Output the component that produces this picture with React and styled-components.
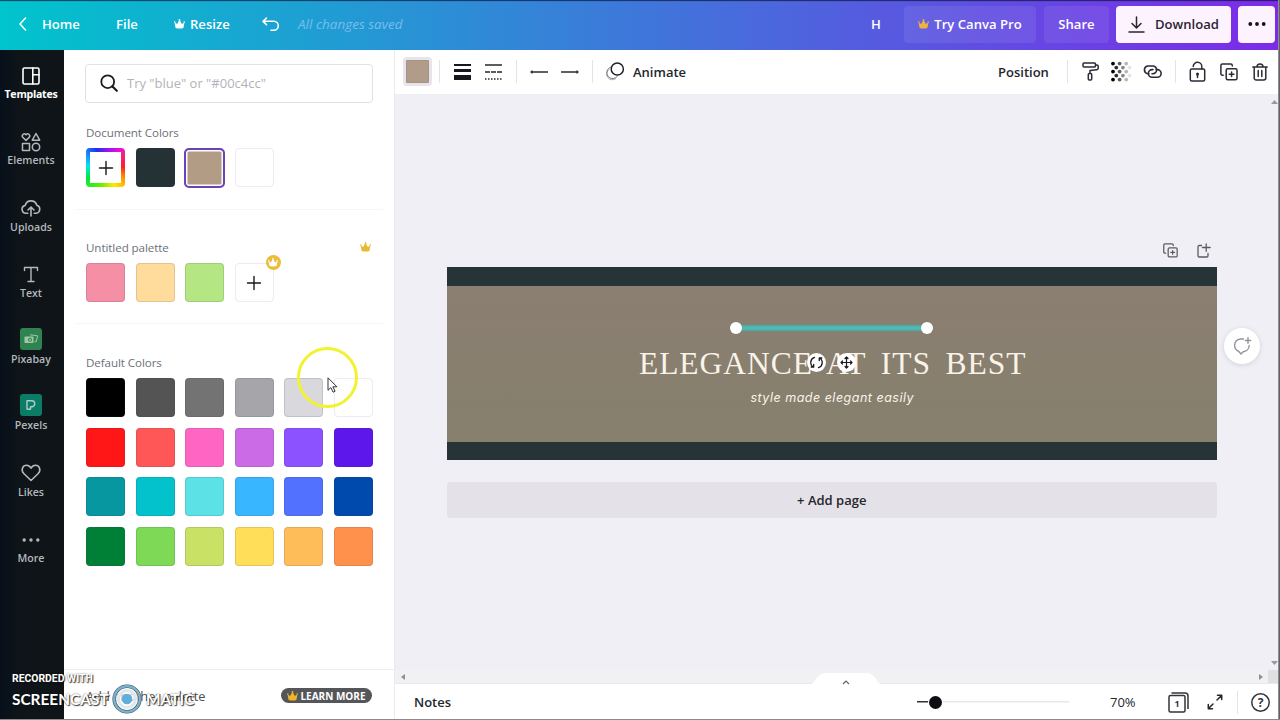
import React from "react";
import styled, { createGlobalStyle } from "styled-components";

const Global = createGlobalStyle`
  * { box-sizing: border-box; }
  body { margin: 0; font-family: "Open Sans", "Noto Sans", sans-serif; overflow: hidden; color: #24272c; }
  svg { display: block; flex: none; overflow: visible; }
`;

/* ---------- shell ---------- */
const Shell = styled.div`
  position: relative;
  width: 1280px;
  height: 720px;
  display: grid;
  grid-template-rows: 50px 669px;
  background: #fff;
  border-bottom: 1px solid #8b8b8e;
  overflow: hidden;
`;
const Edge = styled.div`
  position: absolute;
  top: 0;
  right: 0;
  width: 2px;
  height: 720px;
  background: linear-gradient(90deg, #a4a4a8, #4b4b50);
`;
const Body = styled.div`
  display: grid;
  grid-template-columns: 64px 330px 884px;
`;

/* ---------- top bar ---------- */
const TopBar = styled.header`
  display: flex;
  align-items: center;
  padding: 0 0 2px 19px;
  background: linear-gradient(90deg, #00c4cc, #7d2ae8);
  box-shadow: inset 0 2px 1px -1px rgba(10, 20, 60, 0.75);
  color: #fff;
`;
const TopText = styled.span`
  width: ${(p) => p.$w}px;
  margin-left: ${(p) => p.$gap}px;
  font-size: 13.1px;
  font-weight: 600;
  line-height: 20px;
  white-space: nowrap;
`;
const SavedText = styled(TopText)`
  font-size: 13.5px;
  font-weight: 400;
  font-style: italic;
  color: #78bdec;
`;
const Gap = styled.span`
  width: ${(p) => p.$w}px;
  flex: none;
`;
const TopButton = styled.button`
  width: ${(p) => p.$w}px;
  height: 37px;
  margin-top: 1px;
  margin-right: ${(p) => p.$mr || 0}px;
  padding: 0 0 1px;
  border: 0;
  border-radius: 4px;
  display: flex;
  align-items: center;
  justify-content: center;
  gap: ${(p) => p.$gap || 0}px;
  background: ${(p) => (p.$solid ? "#fdf3ff" : "rgba(255,255,255,0.08)")};
  color: ${(p) => (p.$solid ? "#2a2433" : "#fff")};
  font: 600 13.100px/20px "Open Sans", "Noto Sans", sans-serif;
  white-space: nowrap;
  flex: none;
`;

/* ---------- left rail ---------- */
const Rail = styled.nav`
  background: linear-gradient(90deg, #07101a, #0e1418 30%);
  display: flex;
  flex-direction: column;
`;
const RailItem = styled.div`
  height: 66.3px;
  padding: 14px 2px 0 0;
  display: flex;
  flex-direction: column;
  align-items: center;
  color: ${(p) => (p.$active ? "#fff" : "#b4b8bb")};
`;
const RailIcon = styled.div`
  height: 23px;
  display: flex;
  align-items: center;
  justify-content: center;
`;
const RailLabel = styled.span`
  font-size: 10.600px;
  font-weight: ${(p) => (p.$active ? 700 : 600)};
  line-height: 14px;
  letter-spacing: ${(p) => (p.$active ? -0.25 : 0)}px;
`;
const AppTile = styled.div`
  width: 22px;
  height: 22px;
  margin-bottom: 4px;
  border-radius: 3px;
  background: ${(p) => p.$bg};
  display: flex;
  align-items: center;
  justify-content: center;
`;

/* ---------- colour panel ---------- */
const Panel = styled.aside`
  display: flex;
  flex-direction: column;
  background: #fff;
  padding-top: 14px;
`;
const Search = styled.div`
  width: 288px;
  height: 39px;
  margin-left: 21px;
  padding: 0 0 1px 14px;
  border: 1px solid #e2e2e6;
  border-radius: 4px;
  display: flex;
  align-items: center;
  gap: 9px;
  color: #b2b3b9;
  font-size: 13px;
`;
const Section = styled.section`
  height: ${(p) => p.$h}px;
  margin: 0 11px 0 12px;
  padding: ${(p) => p.$pt}px 10px 0;
  border-bottom: ${(p) => (p.$last ? "0" : "1px solid #f6f5f8")};
`;
const SectionHead = styled.div`
  display: flex;
  align-items: center;
  justify-content: space-between;
  height: 18px;
  margin-bottom: 7px;
  padding-right: 2px;
  font-size: 11.6px;
  font-weight: 500;
  letter-spacing: -0.08px;
  color: #6d7078;
`;
const Swatches = styled.div`
  display: grid;
  grid-template-columns: repeat(6, 39px);
  gap: 10.5px;
  margin-right: -2px;
`;
const Swatch = styled.div`
  position: relative;
  width: 39px;
  height: 39px;
  border-radius: 4px;
  background: ${(p) => p.$c};
  border: 1px solid ${(p) => (p.$light ? "#efe9f2" : "rgba(60,60,80,0.14)")};
  display: flex;
  align-items: center;
  justify-content: center;
`;
const SelectedSwatch = styled(Swatch)`
  border: 2px solid #6b42b8;
  box-shadow: inset 0 0 0 1.5px #fff;
  width: 41px;
  height: 40px;
  margin-left: -1px;
  border-radius: 5px;
`;
const RainbowSwatch = styled(Swatch)`
  border: 0;
  background: conic-gradient(from 45deg, #f0209a, #ff2020 12%, #ffa000 22%, #ffe800 30%, #60f000 42%, #00e840 54%, #00e8e8 64%, #1890ff 72%, #2030f0 80%, #a010f0 90%, #f010d0);
`;
const RainbowCore = styled.div`
  width: 31px;
  height: 31px;
  background: #fff;
  display: flex;
  align-items: center;
  justify-content: center;
`;
const Badge = styled.div`
  position: absolute;
  right: -8px;
  top: -9px;
  width: 15px;
  height: 15px;
  border-radius: 50%;
  background: #ecbd3a;
  display: flex;
  align-items: center;
  justify-content: center;
`;
const PanelFoot = styled.footer`
  height: 50px;
  margin-top: auto;
  padding: 2px 22px 0 22px;
  border-top: 1px solid #eeedf1;
  display: flex;
  align-items: center;
  justify-content: space-between;
  font-size: 12.8px;
  color: #4b4e54;
`;
const LearnPill = styled.span`
  width: 91px;
  height: 15px;
  border-radius: 8px;
  background: #55565a;
  color: #fff;
  font-size: 10px;
  font-weight: 700;
  display: flex;
  align-items: center;
  justify-content: center;
  gap: 2px;
  white-space: nowrap;
`;

/* ---------- editor ---------- */
const Editor = styled.main`
  display: grid;
  grid-template-rows: 44px 576px 14px 35px;
  border-left: 1px solid #eceaf0;
`;
const Tools = styled.div`
  display: flex;
  align-items: center;
  padding: 0 0 1px 8px;
  background: #fff;
`;
const CurrentColor = styled.div`
  width: 29px;
  height: 29px;
  border-radius: 4px;
  border: 3px solid #e9e3eb;
  background: #b09c88;
  box-shadow: inset 0 0 0 1px #a39486;
  flex: none;
`;
const Rule = styled.i`
  width: 1px;
  height: 23px;
  margin: 0 ${(p) => p.$r}px 0 ${(p) => p.$l}px;
  background: #e4e3e8;
  flex: none;
`;
const ToolText = styled.span`
  width: ${(p) => p.$w}px;
  font-size: 13px;
  font-weight: 600;
  white-space: nowrap;
  line-height: 20px;
  flex: none;
`;
const ZoomText = styled(ToolText)`
  font-weight: 500;
`;
const Canvas = styled.div`
  position: relative;
  padding: 148px 0 0 52px;
  background: #f0eff5;
`;
const PageActions = styled.div`
  width: 770px;
  height: 25px;
  padding: 1px 6px 0 0;
  display: flex;
  justify-content: flex-end;
  gap: 19px;
`;
const Design = styled.div`
  position: relative;
  width: 769.5px;
  height: 193px;
  border: solid #263437;
  border-width: 19.5px 0 18.5px;
  background: linear-gradient(#8b7e72, #887f6f 50%, #87806d);
  color: #faf3e9;
  text-align: center;
`;
const Headline = styled.div`
  padding: 60px 0 0 2px;
  height: 99px;
  font: 400 31.5px/36px "Liberation Serif", serif;
  letter-spacing: 1px;
  word-spacing: 5.8px;
  white-space: nowrap;
`;
const Tagline = styled.div`
  padding-left: 1px;
  font: italic 400 12.5px/26px Inter, sans-serif;
  letter-spacing: 0.5px;
`;
const SelectedLine = styled.div`
  position: absolute;
  left: 283px;
  top: 36px;
  width: 203px;
  height: 12px;
  display: flex;
  align-items: center;
  justify-content: space-between;
  background: linear-gradient(#45aaa4, #55bdb5 50%, #45aaa4) center / 184px 6px no-repeat;
`;
const Handle = styled.i`
  width: 12px;
  height: 12px;
  border-radius: 50%;
  background: #fff;
`;
const HandleButtons = styled.div`
  position: absolute;
  left: 360px;
  top: 66.500px;
  display: flex;
  gap: 11px;
`;
const RoundHandle = styled.div`
  width: 19px;
  height: 19px;
  border-radius: 50%;
  background: #fff;
  display: flex;
  align-items: center;
  justify-content: center;
`;
const AddPage = styled.div`
  width: 769.5px;
  height: 36px;
  margin-top: 22px;
  border-radius: 3px;
  background: #e4e2e8;
  display: flex;
  align-items: center;
  justify-content: center;
  font-size: 13px;
  font-weight: 600;
`;
const CommentButton = styled.div`
  position: absolute;
  left: 829px;
  top: 234px;
  width: 36px;
  height: 36px;
  border-radius: 50%;
  background: #fff;
  box-shadow: 0 1px 5px rgba(60, 50, 80, 0.16);
  display: flex;
  align-items: center;
  justify-content: center;
`;
const ScrollUp = styled.svg`
  position: absolute;
  right: 0;
  top: 6px;
`;
const ScrollDown = styled.svg`
  position: absolute;
  right: 0;
  bottom: 5px;
`;
const ScrollBar = styled.div`
  position: relative;
  display: flex;
  align-items: center;
  padding-left: 6px;
  background: #f1f0f3;
  border-bottom: 1px solid #e9e8ec;
`;
const Corner = styled.i`
  width: 10px;
  height: 13px;
  margin-left: auto;
  background: #e0dfe2;
`;
const DrawerTab = styled.svg`
  position: absolute;
  left: 414px;
  top: 3px;
`;
const StatusBar = styled.footer`
  display: flex;
  align-items: center;
  padding: 1px 0 0 19px;
  background: #fff;
`;
const Slider = styled.div`
  width: 152px;
  height: 13px;
  margin-left: 465px;
  padding-left: 12px;
  display: flex;
  align-items: center;
  background: linear-gradient(90deg, #303238 13px, #e8e7eb 13px) center / 100% 1.500px no-repeat;
`;
const Knob = styled.i`
  width: 13px;
  height: 13px;
  border-radius: 50%;
  background: #0c0e12;
  box-shadow: 0 0 0 1px #fff;
`;

/* ---------- overlays ---------- */
const PointerHalo = styled.div`
  position: absolute;
  left: 297px;
  top: 347px;
  width: 61px;
  height: 61px;
  border-radius: 50%;
  border: 3px solid #f2f22e;
`;
const Pointer = styled.svg`
  position: absolute;
  left: 327px;
  top: 377px;
`;
const Watermark = styled.div`
  position: absolute;
  left: 12px;
  top: 672px;
  color: #fff;
  text-shadow: 1px 1px 1px rgba(20, 20, 20, 0.8), 0 0 2px rgba(20, 20, 20, 0.65);
`;
const RecordedWith = styled.div`
  font: 700 10.4px/14px Roboto, sans-serif;
`;
const BrandRow = styled.div`
  display: flex;
  align-items: center;
  height: 26px;
  font: 700 15.4px/26px Lato, sans-serif;
`;
const BrandWord = styled.span`
  width: ${(p) => p.$w}px;
  white-space: nowrap;
`;

const Crown = ({ c, w = 11, h = 10 }) => (
  <svg width={w} height={h} viewBox="0 0 11 10">
    <path d="M1.600 9 .5 3.200 3.100 5 5.500.8 7.900 5l2.600-1.800L9.400 9Q5.500 10 1.600 9Z" fill={c} />
    <circle cx=".8" cy="3" r=".8" fill={c} />
    <circle cx="5.5" cy="1" r=".9" fill={c} />
    <circle cx="10.2" cy="3" r=".8" fill={c} />
  </svg>
);
const Ico = ({ w = 20, h = 20, s = 1.5, c = "currentColor", children }) => (
  <svg width={w} height={h} viewBox={`0 0 ${w} ${h}`} fill="none" stroke={c} strokeWidth={s} strokeLinecap="round" strokeLinejoin="round">
    {children}
  </svg>
);
const Plus = () => (
  <Ico w={14} h={14} s={1.4} c="#17191d"><path d="M7 .5v13M.5 7h13" /></Ico>
);
const Dots = ({ r, step, c }) => (
  <svg width="20" height="6" viewBox="0 0 20 6" fill={c}>
    <circle cx={10 - step} cy="3" r={r} /><circle cx="10" cy="3" r={r} /><circle cx={10 + step} cy="3" r={r} />
  </svg>
);
const CopyPlus = ({ s = 1.5, size = 18, c = "#2b2d33" }) => (
  <svg width={size} height={size} viewBox="0 0 18 18" fill="none" stroke={c} strokeWidth={s} strokeLinecap="round" strokeLinejoin="round">
    <path d="M3.2 12.2H2.4A1.5 1.5 0 0 1 .9 10.7V2.4A1.5 1.5 0 0 1 2.4.9h8.4a1.5 1.5 0 0 1 1.5 1.5v.6" />
    <rect x="6.2" y="5.8" width="10.8" height="11" rx="1.5" /><path d="M11.6 9v4.6M9.3 11.3h4.6" />
  </svg>
);

const railItems = [
  ["Templates", <Ico w={18} h={18} s={1.6}><rect x="1" y="1" width="16" height="16" rx="1.5" /><path d="M10.8 1v16M10.8 7.8H17" /></Ico>],
  ["Elements", <Ico w={20} h={20} s={1.5}><path d="M5 8.4 1.700 5.200C.2 3.200 3.300.2 5 2.800c1.700-2.600 4.800.4 3.300 2.400ZM15 1.500l3.700 6.700h-7.400ZM1.500 11.500h7v7h-7z" /><circle cx="15" cy="15" r="3.700" /></Ico>],
  ["Uploads", <Ico w={20} h={18} s={1.6}><path d="M6.800 14.300H5a4 4 0 0 1-.8-7.900A6 6 0 0 1 15.800 6.300a4.100 4.100 0 0 1-.6 8h-2M10 17V8.500M7 11l3-3 3 3" /></Ico>],
  ["Text", <Ico w={16} h={17} s={1.4}><path d="M1.500 4.500V1.500h13v3M8 1.500v14M5 15.500h6" /></Ico>],
  ["Pixabay", <AppTile $bg="#2f8350"><svg width="14" height="10" viewBox="0 0 14 10"><path d="m6 .8 7.500 1-1.200 5.700-2 .4" fill="none" stroke="#9cc9a4" /><rect x=".5" y="2.500" width="9" height="6.500" rx=".7" fill="#9cc9a4" /><circle cx="6" cy="5.800" r="2" fill="#2f8350" /><circle cx="6" cy="5.800" r="1" fill="#9cc9a4" /></svg></AppTile>],
  ["Pexels", <AppTile $bg="#0b7d66"><Ico w={10} h={10} s={1.400} c="#a9cec5"><path d="M1 .8h4.800a3 3 0 0 1 .7 5.900H4.500V9.200H1Z" /></Ico></AppTile>],
  ["Likes", <Ico w={20} h={18} s={1.600}><path d="M10 16.500 3 9.700C-.8 5.700 2 1.300 5.500 1.300c2 0 3.500 1.200 4.500 2.900 1-1.700 2.500-2.900 4.500-2.900C18 1.300 20.800 5.700 17 9.700Z" /></Ico>],
  ["More", <Dots r={1.700} step={6.800} c="#b4b8bb" />],
];
const defaults = [
  "#000000", "#545454", "#737373", "#a6a6aa", "#d9d8dc", "#ffffff",
  "#ff1616", "#ff5757", "#ff66c4", "#cb6ce6", "#8c52ff", "#5e17eb",
  "#0797a0", "#03c2cb", "#5ce1e6", "#38b6ff", "#5271ff", "#004aad",
  "#008037", "#7ed957", "#c9e265", "#ffde59", "#ffbd59", "#ff914d",
];

export default function App() {
  return (
    <Shell>
      <Global />
      <TopBar>
        <Ico w={8} h={14} s={1.6}><path d="M6.500 1 1 7l5.500 6" /></Ico>
        <TopText $w={37} $gap={15}>Home</TopText>
        <TopText $w={22} $gap={37}>File</TopText>
        <Gap $w={36} /><Crown c="#fff" />
        <TopText $w={40} $gap={5}>Resize</TopText>
        <Gap $w={32} />
        <Ico w={18} h={15} s={1.600}><path d="M4.500 1 1 4.300l3.500 3.300M1.300 4.300h10.500a4.500 4.500 0 0 1 0 9H9" /></Ico>
        <SavedText $w={106} $gap={18}>All changes saved</SavedText>
        <TopText $w={10} $gap={467}>H</TopText>
        <Gap $w={23} />
        <TopButton $w={132} $mr={8} $gap={5}><Crown c="#eeb33e" />Try Canva Pro</TopButton>
        <TopButton $w={65} $mr={7}>Share</TopButton>
        <TopButton $w={115} $mr={7} $gap={10} $solid>
          <Ico w={17} h={17} s={1.500}><path d="M8.500 1v10.500M4 7.500l4.500 4.500L13 7.500M1 16h15" /></Ico>Download
        </TopButton>
        <TopButton $w={37} $solid><Dots r={1.900} step={6.700} c="#16101e" /></TopButton>
      </TopBar>
      <Body>
        <Rail>
          {railItems.map(([name, icon], i) => (
            <RailItem key={name} $active={i === 0}>
              <RailIcon>{icon}</RailIcon>
              <RailLabel $active={i === 0}>{name}</RailLabel>
            </RailItem>
          ))}
        </Rail>
        <Panel>
          <Search>
            <Ico w={18} h={18} s={1.800} c="#1b1d21"><circle cx="7.700" cy="7.700" r="6.400" /><path d="m12.500 12.500 4.300 4.300" strokeWidth="2.200" /></Ico>
            Try "blue" or "#00c4cc"
          </Search>
          <Section $h={107} $pt={20}>
            <SectionHead>Document Colors</SectionHead>
            <Swatches>
              <RainbowSwatch><RainbowCore><Plus /></RainbowCore></RainbowSwatch>
              <Swatch $c="#243236" />
              <SelectedSwatch $c="#b39c86" />
              <Swatch $c="#fff" $light />
            </Swatches>
          </Section>
          <Section $h={114} $pt={28}>
            <SectionHead>Untitled palette<Crown c="#e8b931" /></SectionHead>
            <Swatches>
              <Swatch $c="#f58fa5" /><Swatch $c="#ffdb9c" /><Swatch $c="#b4e683" />
              <Swatch $c="#fff" $light><Plus /><Badge><Crown c="#fff" w={10} h={9} /></Badge></Swatch>
            </Swatches>
          </Section>
          <Section $h={260} $pt={29} $last>
            <SectionHead>Default Colors</SectionHead>
            <Swatches>{defaults.map((c) => <Swatch key={c} $c={c} $light={c === "#ffffff"} />)}</Swatches>
          </Section>
          <PanelFoot>
            Add another palette
            <LearnPill><Crown c="#f0b429" />LEARN MORE</LearnPill>
          </PanelFoot>
        </Panel>
        <Editor>
          <Tools>
            <CurrentColor />
            <Rule $l={7} $r={14} />
            <svg width="17" height="16" viewBox="0 0 17 16" fill="#16181c"><path d="M0 0h17v2H0zM0 5h17v3H0zM0 11h17v5H0z" /></svg>
            <Gap $w={14} />
            <svg width="17" height="16" viewBox="0 0 17 16" fill="none" stroke="#25272c"><path d="M0 1h17" strokeWidth="1.500" /><path d="M0 8h17" strokeWidth="1.500" strokeDasharray="5 1" /><path d="M0 15h17" strokeWidth="1.500" strokeDasharray="1.500 1.500" /></svg>
            <Rule $l={14} $r={13} />
            <svg width="18" height="6" viewBox="0 0 18 6"><path d="M1 3h17" stroke="#292b30" strokeWidth="1.500" /><path d="m0 3 2.500-2v4z" fill="#292b30" /></svg>
            <Gap $w={13} />
            <svg width="18" height="6" viewBox="0 0 18 6"><path d="M0 3h17" stroke="#292b30" strokeWidth="1.500" /><path d="m18 3-2.500-2v4z" fill="#292b30" /></svg>
            <Rule $l={13} $r={13} />
            <Ico w={18} h={19} s={1.500} c="#202226"><path d="M3 7.500a5.500 5.500 0 1 0 6.500 9.300" stroke="#a9a9ad" strokeWidth="1" /><path d="M4.700 5a6 6 0 1 0 7 9" stroke="#77797e" strokeWidth="1" /><circle cx="11.300" cy="7" r="6.100" /></Ico>
            <Gap $w={9} />
            <ToolText $w={54}>Animate</ToolText>
            <Gap $w={311} />
            <ToolText $w={51}>Position</ToolText>
            <Rule $l={18} $r={14} />
            <Ico w={17} h={19} s={1.500} c="#2b2d33"><rect x="1" y="1" width="12.500" height="4" rx="1" /><path d="M13.500 3H15a1.200 1.200 0 0 1 1.200 1.200v2A1.500 1.500 0 0 1 14.700 7.700L8 8.500V11" /><rect x="6.300" y="11.500" width="3.400" height="6.500" rx="1" /></Ico>
            <Gap $w={12} />
            <svg width="19" height="19" viewBox="0 0 19 19">
              {[0, 1, 2, 3, 4, 5].map((col) => [0, 1, 2, 3, 4].map((row) => (col + row) % 2 === 0 && (
                <circle key={`${col}-${row}`} cx={2 + col * 3.300} cy={1.600 + row * 4} r="1.900" fill="#000" opacity={1 - col * 0.18} />
              )))}
            </svg>
            <Gap $w={13} />
            <Ico w={19} h={15} s={1.600} c="#2b2d33"><path d="M5.800 9.700H4.700A3.900 3.900 0 0 1 4.700 2h5.100a3.850 3.850 0 0 1 0 7.700H9" /><path d="M13.200 5.600h1.100a3.850 3.850 0 0 1 0 7.700H9.200a3.850 3.850 0 0 1 0-7.700H10" /></Ico>
            <Rule $l={13} $r={13} />
            <Ico w={17} h={20} s={1.500} c="#2b2d33"><rect x="1.300" y="7" width="14.400" height="12" rx="1.500" /><path d="M4.200 4.500A4.300 4.300 0 0 1 12.800 4.700V7M8.500 12.500v3" /><circle cx="8.500" cy="12" r=".8" /></Ico>
            <Gap $w={14} />
            <CopyPlus />
            <Gap $w={14} />
            <Ico w={16} h={18} s={1.500} c="#2b2d33"><path d="M.8 4h14.400M5 4a3 3 0 0 1 6 0M2.200 4v11a2 2 0 0 0 2 2h7.600a2 2 0 0 0 2-2V4M6.200 7.500v6M9.800 7.500v6" /></Ico>
          </Tools>
          <Canvas>
            <PageActions>
              <CopyPlus size={15} s={1.500} c="#5a5c62" />
              <Ico w={14} h={15} s={1.300} c="#5a5c62"><path d="M4.500 2.500H2.200A1.200 1.200 0 0 0 1 3.700v9.100A1.200 1.200 0 0 0 2.200 14h7.600a1.200 1.200 0 0 0 1.200-1.200V10.500M9.200.8v7.500M5.400 4.500h7.800" /></Ico>
            </PageActions>
            <Design>
              <Headline>ELEGANCE AT ITS BEST</Headline>
              <Tagline>style made elegant easily</Tagline>
              <SelectedLine><Handle /><Handle /></SelectedLine>
              <HandleButtons>
                <RoundHandle><Ico w={13} h={13} s={1.300} c="#17191c"><path d="M4.500 1.300A5.300 5.300 0 0 0 3.500 11M1.200 11h2.500V8.500M8.500 11.700A5.300 5.300 0 0 0 9.500 2M11.800 2H9.300v2.500" /></Ico></RoundHandle>
                <RoundHandle><Ico w={13} h={13} s={1.200} c="#17191c"><path d="M6.500 1v11M1 6.500h11M5 2.500l1.500-1.500L8 2.500M5 10.500 6.500 12 8 10.500M2.500 5 1 6.500 2.500 8M10.500 5 12 6.500 10.500 8" /></Ico></RoundHandle>
              </HandleButtons>
            </Design>
            <AddPage>+ Add page</AddPage>
            <CommentButton>
              <Ico w={20} h={18} s={1.400} c="#929398"><path d="M11.500 2H8.300a6.500 6.500 0 0 0-1.500 12.500L9 17l2.200-2.300a6.500 6.500 0 0 0 6-6.200M16 .8v5.400M13.300 3.500h5.400" /></Ico>
            </CommentButton>
            <ScrollUp width="7" height="4" viewBox="0 0 7 4"><path d="M0 4 3.500 0 7 4Z" fill="#98989d" /></ScrollUp>
            <ScrollDown width="7" height="4" viewBox="0 0 7 4"><path d="m0 0 3.500 4L7 0Z" fill="#98989d" /></ScrollDown>
          </Canvas>
          <ScrollBar>
            <svg width="4" height="6" viewBox="0 0 4 6"><path d="M4 0v6L0 3Z" fill="#8f8f94" /></svg>
            <Gap $w={854} />
            <svg width="4" height="6" viewBox="0 0 4 6"><path d="M0 0v6l4-3Z" fill="#8f8f94" /></svg>
            <Corner />
            <DrawerTab width="74" height="12" viewBox="0 0 74 12"><path d="M0 12C7 11 6 1 16 0H58c10 1 9 11 16 12Z" fill="#fff" /><path d="m34 11 3-3 3 3" fill="none" stroke="#64666b" strokeWidth="1.200" /></DrawerTab>
          </ScrollBar>
          <StatusBar>
            <ToolText $w={38}>Notes</ToolText>
            <Slider><Knob /></Slider>
            <Gap $w={41} />
            <ZoomText $w={26}>70%</ZoomText>
            <Gap $w={32} />
            <svg width="21" height="21" viewBox="0 0 21 21" fill="none" stroke="#33353a" strokeWidth="1.500"><path d="M3.500 1H17a3 3 0 0 1 3 3v13" /><rect x="1" y="3.500" width="16" height="16.500" rx="1.500" /><text x="9" y="15" textAnchor="middle" fontSize="9" fontWeight="700" fill="#33353a" stroke="none">1</text></svg>
            <Gap $w={18} />
            <Ico w={16} h={16} s={1.500} c="#25272c"><path d="M10 6l4.500-4.500M10.500 1.300h4.200v4.200M6 10l-4.500 4.500M1.300 10.500v4.200h4.200" /></Ico>
            <Rule $l={14} $r={13} />
            <svg width="19" height="19" viewBox="0 0 19 19" fill="none" stroke="#33353a" strokeWidth="1.500"><circle cx="9.500" cy="9.500" r="8.700" /><text x="9.500" y="14" textAnchor="middle" fontSize="12" fontWeight="700" fill="#33353a" stroke="none">?</text></svg>
          </StatusBar>
        </Editor>
      </Body>
      <PointerHalo />
      <Pointer width="11" height="16" viewBox="0 0 11 16"><path d="M1 .8v12.500l2.900-2.700 2.200 4.600 2-1-2.200-4.400h4Z" fill="#fff" stroke="#35353a" /></Pointer>
      <Watermark>
        <RecordedWith>RECORDED WITH</RecordedWith>
        <BrandRow>
          <BrandWord $w={100}>SCREENCAST</BrandWord>
          <svg width="30" height="30" viewBox="0 0 30 30" fill="none"><circle cx="15" cy="15" r="12.800" fill="rgba(255,255,255,.65)" stroke="#45525b" strokeWidth="3.600" /><circle cx="15" cy="15" r="12.800" stroke="#79b3cf" strokeWidth="2.400" /><circle cx="15" cy="15" r="8.500" stroke="#dfe8ec" strokeWidth="3" /><circle cx="15" cy="15" r="5.300" fill="#62aedb" /></svg>
          <Gap $w={4} />
          <BrandWord $w={50}>MATIC</BrandWord>
        </BrandRow>
      </Watermark>
      <Edge />
    </Shell>
  );
}
